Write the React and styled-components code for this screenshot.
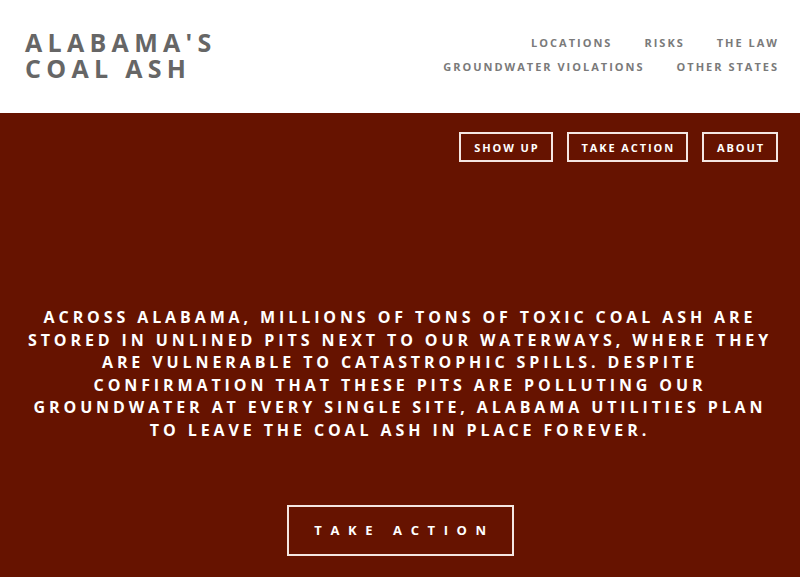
import React from 'react';
import styled, {createGlobalStyle} from 'styled-components';

const GlobalStyle = createGlobalStyle`
  html, body {
    margin: 0;
    padding: 0;
    background: #661300;
  }
  body {
    font-family: "Open Sans", "Liberation Sans", sans-serif;
    -webkit-font-smoothing: antialiased;
  }
`;

const Header = styled.header`
  height: 113px;
  background: #fff;
  display: flex;
  justify-content: space-between;
  align-items: flex-start;
  padding: 0 23px 0 25px;
  box-sizing: border-box;
`;

const Logo = styled.a`
  margin-top: 29px;
  display: flex;
  flex-direction: column;
  color: #666666;
  font-size: 25px;
  font-weight: 700;
  line-height: 26px;
  letter-spacing: 5.3px;
  text-decoration: none;
  text-transform: uppercase;
`;

const Nav = styled.nav`
  margin-top: 36px;
  display: flex;
  flex-direction: column;
  align-items: flex-end;
  gap: 10px;
`;

const NavRow = styled.div`
  display: flex;
  gap: 34px;
`;

const NavLink = styled.a`
  color: #7a7a7a;
  font-size: 11px;
  font-weight: 700;
  line-height: 14px;
  letter-spacing: 2px;
  margin-right: -2px;
  text-decoration: none;
`;

const Hero = styled.section`
  background: #661300;
  color: #fff;
  padding: 19px 22px 40px;
  display: flex;
  flex-direction: column;
  align-items: center;
`;

const ButtonRow = styled.div`
  align-self: stretch;
  display: flex;
  justify-content: flex-end;
  gap: 14px;
`;

const OutlineButton = styled.a`
  display: flex;
  align-items: center;
  justify-content: center;
  height: 30px;
  padding: 0 11px 0 13px;
  border: 2px solid #f4e6e2;
  box-sizing: border-box;
  color: #fff;
  font-size: 11px;
  font-weight: 700;
  letter-spacing: 1.9px;
  text-decoration: none;
`;

const BigButton = styled(OutlineButton)`
  width: 227px;
  height: 51px;
  padding: 0 0 0 9px;
  font-size: 13px;
  letter-spacing: 8.6px;
`;

const Lead = styled.p`
  margin: 144px 0 63px;
  text-align: center;
  white-space: nowrap;
  font-size: 16px;
  font-weight: 700;
  line-height: 22.6px;
  letter-spacing: 3.9px;
  text-transform: uppercase;
`;

export default function App() {
  return (
    <>
      <GlobalStyle />
      <Header>
        <Logo>
          <span>Alabama's</span>
          <span>Coal Ash</span>
        </Logo>
        <Nav>
          <NavRow>
            <NavLink>LOCATIONS</NavLink>
            <NavLink>RISKS</NavLink>
            <NavLink>THE LAW</NavLink>
          </NavRow>
          <NavRow>
            <NavLink>GROUNDWATER VIOLATIONS</NavLink>
            <NavLink>OTHER STATES</NavLink>
          </NavRow>
        </Nav>
      </Header>
      <Hero>
        <ButtonRow>
          <OutlineButton>SHOW UP</OutlineButton>
          <OutlineButton>TAKE ACTION</OutlineButton>
          <OutlineButton>ABOUT</OutlineButton>
        </ButtonRow>
        <Lead>
          Across Alabama, millions of tons of toxic coal ash are<br />
          stored in unlined pits next to our waterways, where they<br />
          are vulnerable to catastrophic spills. Despite<br />
          confirmation that these pits are polluting our<br />
          groundwater at every single site, Alabama utilities plan<br />
          to leave the coal ash in place forever.
        </Lead>
        <BigButton>TAKE ACTION</BigButton>
      </Hero>
    </>
  );
}
